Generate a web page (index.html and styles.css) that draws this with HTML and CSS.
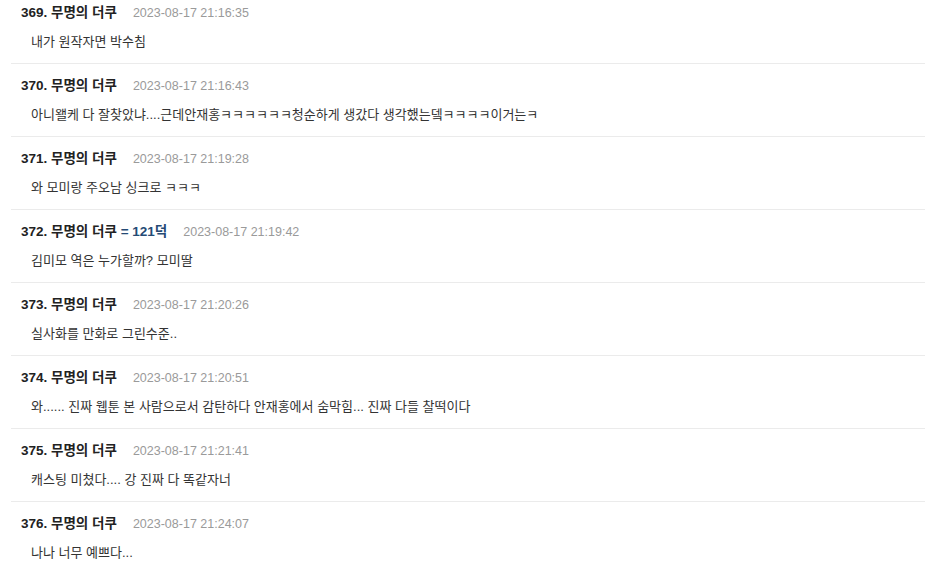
FILE: index.html
```html
<!DOCTYPE html>
<html lang="ko">
<head>
<meta charset="utf-8">
<link rel="stylesheet" href="styles.css">
</head>
<body>
<ul class="list">
  <li class="item">
    <div class="head"><span class="name">369. 무명의 더쿠</span><span class="date">2023-08-17 21:16:35</span></div>
    <div class="body">내가 원작자면 박수침</div>
  </li>
  <li class="item">
    <div class="head"><span class="name">370. 무명의 더쿠</span><span class="date">2023-08-17 21:16:43</span></div>
    <div class="body">아니왤케 다 잘찾았냐....근데안재홍ㅋㅋㅋㅋㅋㅋ청순하게 생갔다 생각했는뎈ㅋㅋㅋㅋ이거는ㅋ</div>
  </li>
  <li class="item">
    <div class="head"><span class="name">371. 무명의 더쿠</span><span class="date">2023-08-17 21:19:28</span></div>
    <div class="body">와 모미랑 주오남 싱크로 ㅋㅋㅋ</div>
  </li>
  <li class="item">
    <div class="head"><span class="name">372. 무명의 더쿠 <span class="tag">= 121덕</span></span><span class="date">2023-08-17 21:19:42</span></div>
    <div class="body">김미모 역은 누가할까? 모미딸</div>
  </li>
  <li class="item">
    <div class="head"><span class="name">373. 무명의 더쿠</span><span class="date">2023-08-17 21:20:26</span></div>
    <div class="body">실사화를 만화로 그린수준..</div>
  </li>
  <li class="item">
    <div class="head"><span class="name">374. 무명의 더쿠</span><span class="date">2023-08-17 21:20:51</span></div>
    <div class="body">와...... 진짜 웹툰 본 사람으로서 감탄하다 안재홍에서 숨막힘... 진짜 다들 찰떡이다</div>
  </li>
  <li class="item">
    <div class="head"><span class="name">375. 무명의 더쿠</span><span class="date">2023-08-17 21:21:41</span></div>
    <div class="body">캐스팅 미쳤다.... 강 진짜 다 똑같자너</div>
  </li>
  <li class="item">
    <div class="head"><span class="name">376. 무명의 더쿠</span><span class="date">2023-08-17 21:24:07</span></div>
    <div class="body">나나 너무 예쁘다...</div>
  </li>
</ul>
</body>
</html>
```

FILE: styles.css
```css
html, body {
  margin: 0;
  padding: 0;
  background: #fff;
}
body {
  font-family: "Liberation Sans", "Noto Sans CJK KR", sans-serif;
  color: #222;
  overflow: hidden;
}
.list {
  list-style: none;
  margin: -9px 0 0 11px;
  padding: 0;
}
.item {
  padding: 12px 0 11px 10px;
  border-bottom: 1px solid #ebebeb;
}
.head {
  display: flex;
  align-items: center;
  height: 20px;
  line-height: 20px;
}
.name {
  font-size: 13.5px;
  font-weight: bold;
  color: #222;
}
.tag {
  color: #254a75;
}
.date {
  margin-left: 16px;
  font-size: 12.5px;
  color: #9a9a9a;
}
.body {
  margin-top: 9px;
  padding-left: 10px;
  font-size: 13px;
  line-height: 20px;
  color: #333;
}
```
